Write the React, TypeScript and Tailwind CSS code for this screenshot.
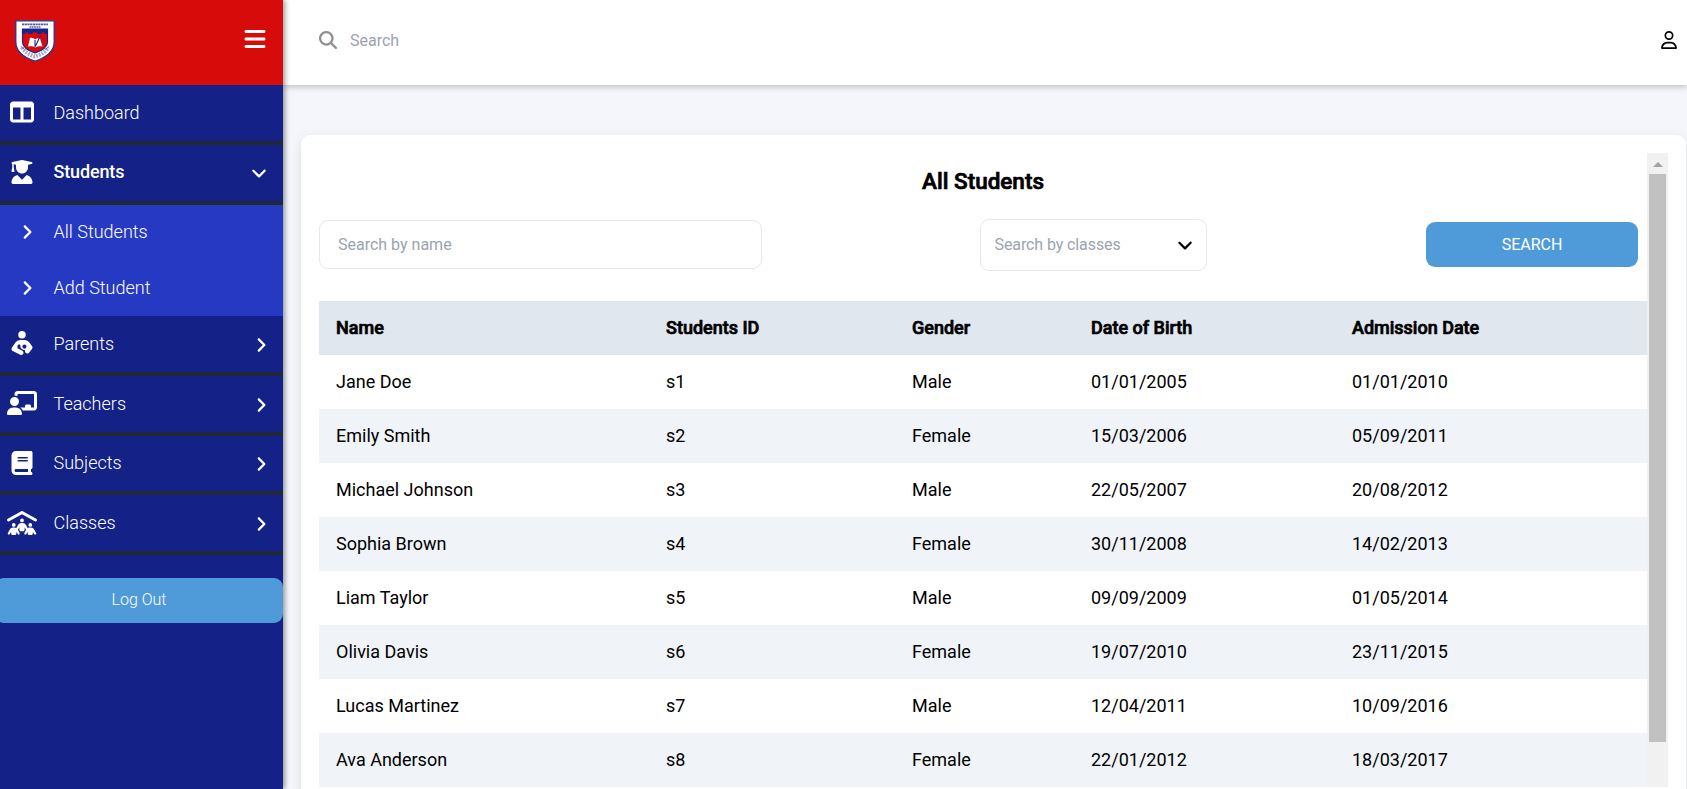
import React from "react";
import {
  FaTableColumns,
  FaUserGraduate,
  FaPersonBreastfeeding,
  FaChalkboardUser,
  FaBook,
  FaPeopleRoof,
  FaAngleRight,
  FaAngleDown,
  FaMagnifyingGlass,
  FaRegUser,
  FaBars,
} from "react-icons/fa6";

const students = [
  ["Jane Doe", "s1", "Male", "01/01/2005", "01/01/2010"],
  ["Emily Smith", "s2", "Female", "15/03/2006", "05/09/2011"],
  ["Michael Johnson", "s3", "Male", "22/05/2007", "20/08/2012"],
  ["Sophia Brown", "s4", "Female", "30/11/2008", "14/02/2013"],
  ["Liam Taylor", "s5", "Male", "09/09/2009", "01/05/2014"],
  ["Olivia Davis", "s6", "Female", "19/07/2010", "23/11/2015"],
  ["Lucas Martinez", "s7", "Male", "12/04/2011", "10/09/2016"],
  ["Ava Anderson", "s8", "Female", "22/01/2012", "18/03/2017"],
];

const columns = ["Name", "Students ID", "Gender", "Date of Birth", "Admission Date"];

const grid = "grid h-[54px] grid-cols-[330px_246px_179px_261px_1fr] items-center pb-[2px] pl-[17px]";

function Crest() {
  return (
    <svg width="40" height="42" viewBox="0 0 40 42">
      <path d="M.8.8h38.4V22c0 9-8 15.500-19.200 19.200C8.800 37.500.8 31 .8 22z" fill="#fff" stroke="#26348f" strokeWidth="1.300" />
      <path d="M7.500 9h25v13c0 5-5 8.500-12.500 11-7.500-2.500-12.500-6-12.500-11z" fill="#d90a0c" stroke="#17258a" strokeWidth="1.200" />
      <path d="M7.500 9h25v5h-3v-1.500h-3V14h-4v-1.500h-5V14h-4v-1.500h-3V14h-3z" fill="#17258a" />
      <path d="M15 18c2-.8 4 0 5 1.500 1.500-1 3.500-1.500 5-1l2.500 8c-3-.6-5 0-7 1-2-1.200-5-1.500-7.500-1z" fill="#fff" />
      <path d="M20 20v7M25.500 15.500L20.500 26" stroke="#17258a" strokeWidth="1.100" fill="none" />
      <path d="M7 4.400h26" stroke="#4a56a3" strokeWidth="1.800" strokeDasharray="2.200 .5" />
      <path d="M14.500 7h11" stroke="#5a65ab" strokeWidth="1.300" strokeDasharray="1.800 .5" />
      <path d="M7 27.500C10 32.500 15 35 20 36.500c5-1.500 10-4 13-9" stroke="#a3a9d2" strokeWidth="4" strokeDasharray="1.800 1.100" fill="none" />
      <path d="M6 26.500l3.500 3M34 26.500l-3.500 3" stroke="#5a65ab" strokeWidth="1" fill="none" />
    </svg>
  );
}

type ItemProps = {
  icon: React.ReactNode;
  label: string;
  open?: boolean;
  arrow?: boolean;
};

function NavItem({ icon, label, open, arrow = true }: ItemProps) {
  return (
    <div className="flex h-[59.750px] items-center border-b-4 border-[#1f2937] pr-[13px]">
      <span className="flex w-[44px] shrink-0 justify-center pb-[1px] text-[24px]">{icon}</span>
      <span className={open ? "ml-[9.500px] flex-1 pb-[2px] font-medium tracking-[-0.150px]" : "ml-[9.500px] flex-1 pb-[1px] font-light"}>{label}</span>
      {arrow && (open ? <FaAngleDown className="mt-[1px] mr-[2px] text-[18px]" /> : <FaAngleRight className="mt-[2px] text-[18px]" />)}
    </div>
  );
}

function SubItem({ label }: { label: string }) {
  return (
    <div className="flex h-[55.750px] items-center bg-[#2639c3] font-light">
      <FaAngleRight className="ml-[18px] text-[18px]" />
      <span className="ml-[17.500px] pb-[2px]">{label}</span>
    </div>
  );
}

export default function App() {
  return (
    <div className="flex h-[789px] w-full overflow-hidden bg-[#f4f6fb] font-[Roboto,sans-serif] text-[18px] leading-[27px] text-black">
      <aside className="z-10 flex w-[283px] shrink-0 flex-col bg-[#142287] text-white shadow-[2px_0_5px_rgba(0,0,0,0.4)]">
        <div className="flex h-[85px] items-center justify-between bg-[#d80b0b] pr-[16px] pl-[15px]">
          <div className="pb-[4px]"><Crest /></div>
          <FaBars className="mb-[7px] text-[24px]" />
        </div>
        <nav>
          <NavItem icon={<FaTableColumns />} label="Dashboard" arrow={false} />
          <NavItem icon={<FaUserGraduate />} label="Students" open />
          <SubItem label="All Students" />
          <SubItem label="Add Student" />
          <NavItem icon={<FaPersonBreastfeeding />} label="Parents" />
          <NavItem icon={<FaChalkboardUser className="!w-[30px]" />} label="Teachers" />
          <NavItem icon={<FaBook />} label="Subjects" />
          <NavItem icon={<FaPeopleRoof className="!w-[30px]" />} label="Classes" />
        </nav>
        <button className="mt-[23px] -ml-[5px] h-[45px] w-[288px] rounded-[9px] bg-[#4f9bda] pb-[2px] text-[16px] font-light">
          Log Out
        </button>
      </aside>

      <main className="flex min-w-0 flex-1 flex-col">
        <header className="z-[5] flex h-[85px] shrink-0 items-center bg-white pr-[9px] pb-[6px] pl-[36px] shadow-[0_2px_6px_rgba(0,0,0,0.22)]">
          <FaMagnifyingGlass className="text-[18px] text-[#8f8f8f]" />
          <span className="ml-[13px] flex-1 pt-[2px] text-[16px] text-[#9ca3af]">Search</span>
          <FaRegUser className="text-[18px]" />
        </header>

        <section className="mt-[50px] mr-px ml-[18px] flex h-[700px] rounded-t-[9px] bg-white p-[18px] shadow-[0_4px_12px_rgba(0,0,0,0.1)]">
          <div className="min-w-0 flex-1">
            <h1 className="pt-[13px] text-center text-[22.500px] leading-[30px] font-medium [-webkit-text-stroke:0.7px_black]">All Students</h1>
            <div className="mt-[23px] flex h-[52px] items-center justify-between pr-[9px]">
              <div className="mb-[1px] flex h-[49px] w-[443px] items-center rounded-[9px] border border-[#e5e7eb] pl-[18px] text-[16px] text-[#9ca3af]">
                Search by name
              </div>
              <div className="-ml-[2px] flex h-[52px] w-[227px] items-center justify-between rounded-[9px] border border-[#e5e7eb] pr-[12px] pb-[1px] pl-[14px] text-[16px] text-[#9ca3af]">
                <span className="tracking-[-0.1px]">Search by classes</span>
                <FaAngleDown className="text-[18px] text-black" />
              </div>
              <button className="mb-[1px] h-[45px] w-[212px] rounded-[9px] bg-[#4f9bda] text-[16px] text-white">SEARCH</button>
            </div>
            <div className="mt-[30px]">
              <div className={grid + " bg-[#e0e7ef] font-medium [-webkit-text-stroke:0.7px_black]"}>
                {columns.map((c) => (
                  <span key={c}>{c}</span>
                ))}
              </div>
              {students.map((row, i) => (
                <div key={row[1]} className={grid + (i % 2 ? " bg-[#f0f4f9]" : " bg-white")}>
                  {row.map((v, j) => (
                    <span key={j}>{v}</span>
                  ))}
                </div>
              ))}
            </div>
          </div>
          <div className="flex w-[21px] shrink-0 flex-col items-center bg-[#f1f1f1]">
            <div className="flex h-[21px] items-center">
              <svg width="10" height="5" viewBox="0 0 10 5" className="mt-[2px]">
                <path d="M5 0l5 5H0z" fill="#a3a3a3" />
              </svg>
            </div>
            <div className="h-[568px] w-[17px] bg-[#c1c1c1]" />
          </div>
        </section>
      </main>
    </div>
  );
}
